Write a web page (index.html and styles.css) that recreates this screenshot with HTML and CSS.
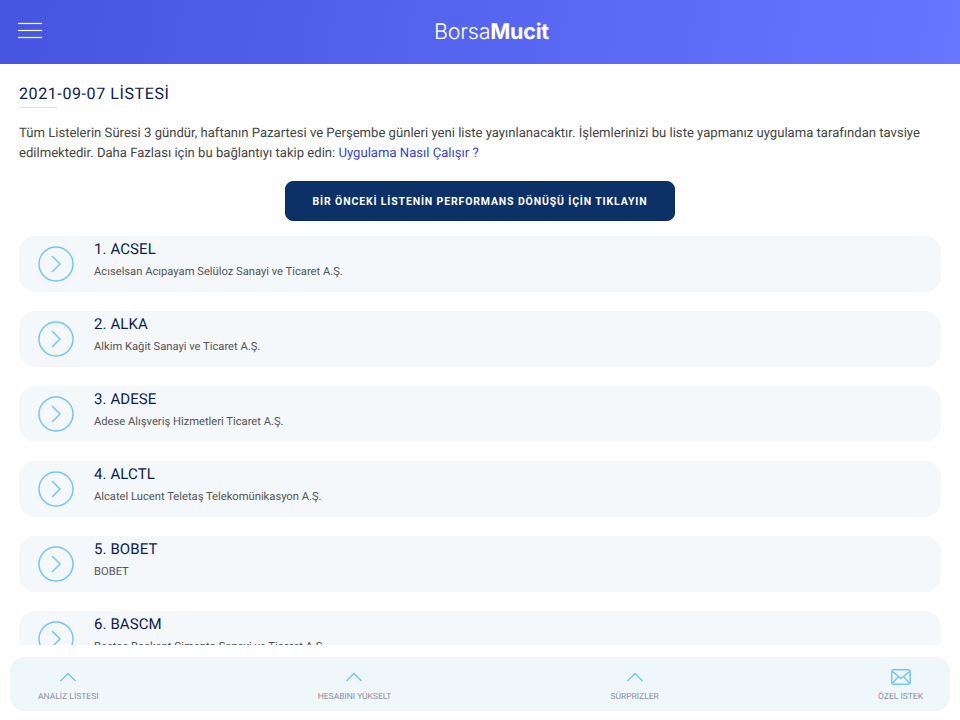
FILE: index.html
```html
<!DOCTYPE html>
<html lang="en">
<head>
    <meta charset="UTF-8">
    <meta name="viewport" content="width=device-width, initial-scale=1.0">
    <title>BorsaMucit</title>
    <link rel="stylesheet" href="styles.css">
</head>
<body>
    <header class="top-bar">
        <div class="menu-btn"><span></span><span></span><span></span></div>
        <div class="logo">Borsa<b>Mucit</b></div>
    </header>

    <main class="content">
        <h1 class="page-title">2021-09-07 LİSTESİ</h1>
        <p class="intro">Tüm Listelerin Süresi 3 gündür, haftanın Pazartesi ve Perşembe günleri yeni liste yayınlanacaktır. İşlemlerinizi bu liste yapmanız uygulama tarafından tavsiye edilmektedir. Daha Fazlası için bu bağlantıyı takip edin: <a href="#">Uygulama Nasıl Çalışır ?</a></p>
        <div class="perf-wrap">
            <button class="perf-btn">BİR ÖNCEKİ LİSTENİN PERFORMANS DÖNÜŞÜ İÇİN TIKLAYIN</button>
        </div>

        <div class="stock-list">
            <div class="stock">
                <svg class="stock-icon" viewBox="0 0 36 36"><circle cx="18" cy="18" r="17" /><path d="M14 10l8 8-8 8" /></svg>
                <div><div class="stock-name">1. ACSEL</div><div class="stock-desc">Acıselsan Acıpayam Selüloz Sanayi ve Ticaret A.Ş.</div></div>
            </div>
            <div class="stock">
                <svg class="stock-icon" viewBox="0 0 36 36"><circle cx="18" cy="18" r="17" /><path d="M14 10l8 8-8 8" /></svg>
                <div><div class="stock-name">2. ALKA</div><div class="stock-desc">Alkim Kağit Sanayi ve Ticaret A.Ş.</div></div>
            </div>
            <div class="stock">
                <svg class="stock-icon" viewBox="0 0 36 36"><circle cx="18" cy="18" r="17" /><path d="M14 10l8 8-8 8" /></svg>
                <div><div class="stock-name">3. ADESE</div><div class="stock-desc">Adese Alışveriş Hizmetleri Ticaret A.Ş.</div></div>
            </div>
            <div class="stock">
                <svg class="stock-icon" viewBox="0 0 36 36"><circle cx="18" cy="18" r="17" /><path d="M14 10l8 8-8 8" /></svg>
                <div><div class="stock-name">4. ALCTL</div><div class="stock-desc">Alcatel Lucent Teletaş Telekomünikasyon A.Ş.</div></div>
            </div>
            <div class="stock">
                <svg class="stock-icon" viewBox="0 0 36 36"><circle cx="18" cy="18" r="17" /><path d="M14 10l8 8-8 8" /></svg>
                <div><div class="stock-name">5. BOBET</div><div class="stock-desc">BOBET</div></div>
            </div>
            <div class="stock">
                <svg class="stock-icon" viewBox="0 0 36 36"><circle cx="18" cy="18" r="17" /><path d="M14 10l8 8-8 8" /></svg>
                <div><div class="stock-name">6. BASCM</div><div class="stock-desc">Bastaş Başkent Çimento Sanayi ve Ticaret A.Ş.</div></div>
            </div>
        </div>
    </main>

    <nav class="tab-bar">
        <div class="tab">
            <svg class="tab-icon" viewBox="0 0 20 20"><path d="M2.500 14L10 6.500l7.500 7.500" /></svg>
            <span>ANALİZ LİSTESİ</span>
        </div>
        <div class="tab">
            <svg class="tab-icon" viewBox="0 0 20 20"><path d="M2.500 14L10 6.500l7.500 7.500" /></svg>
            <span>HESABINI YÜKSELT</span>
        </div>
        <div class="tab">
            <svg class="tab-icon" viewBox="0 0 20 20"><path d="M2.500 14L10 6.500l7.500 7.500" /></svg>
            <span>SÜRPRİZLER</span>
        </div>
        <div class="tab">
            <svg class="tab-icon mail" viewBox="0 0 20 16"><rect x="0.800" y="0.800" width="18.400" height="14.400" rx="2" /><path d="M1.500 2.500L10 9.500l8.500-7M1.500 14l6-6.500M18.500 14l-6-6.500" /></svg>
            <span>ÖZEL İSTEK</span>
        </div>
    </nav>
</body>
</html>
```

FILE: styles.css
```css
body {
    font-family: Roboto, sans-serif;
    margin: 0;
    height: 720px;
    overflow: hidden;
    background-color: #fff;
    color: #333;
    display: flex;
    flex-direction: column;
    text-rendering: geometricPrecision;
}
.top-bar {
    flex: none;
    height: 64px;
    display: flex;
    align-items: center;
    justify-content: center;
    position: relative;
    background: linear-gradient(100deg, #4555e0 0%, #6676ff 100%);
}
.menu-btn {
    position: absolute;
    left: 18px;
    top: 23px;
    width: 24px;
    height: 15px;
    display: flex;
    flex-direction: column;
    justify-content: space-between;
}
.menu-btn span {
    display: block;
    height: 1px;
    background: #fff;
    box-shadow: 0 0 1px #fff;
}
.logo {
    font-family: Inter, sans-serif;
    font-size: 21.500px;
    font-weight: 300;
    color: #fff;
    letter-spacing: -0.2px;
    padding-left: 23px;
}
.logo b {
    font-weight: 700;
}
.content {
    flex: none;
    height: 581px;
    overflow: hidden;
    padding: 0 19px;
}
.page-title {
    margin: 20px 0 0;
    font-size: 16px;
    line-height: 19px;
    font-weight: 400;
    color: #0a1a55;
    letter-spacing: 0.6px;
    padding-bottom: 5px;
    position: relative;
}
.page-title::after {
    content: "";
    position: absolute;
    left: 0;
    bottom: 0;
    width: 38px;
    height: 1px;
    background: #d9e2ee;
}
.intro {
    margin: 16px 0 0;
    font-size: 13.100px;
    line-height: 20px;
    color: #444;
}
.intro a {
    color: #3344e0;
    text-decoration: none;
}
.perf-wrap {
    display: flex;
    justify-content: center;
    margin-top: 17px;
}
.perf-btn {
    width: 390px;
    height: 40px;
    border: 1px solid #0a2a5c;
    border-radius: 8px;
    background: #0c3166;
    color: #fff;
    font-family: Roboto, sans-serif;
    font-size: 10.500px;
    font-weight: 700;
    letter-spacing: 0.85px;
}
.stock-list {
    margin-top: 15px;
    display: flex;
    flex-direction: column;
    gap: 19px;
}
.stock {
    flex: none;
    height: 56px;
    display: flex;
    align-items: flex-start;
    gap: 20px;
    padding-left: 19px;
    background: #f4f8fa;
    border-radius: 16px;
}
.stock-icon {
    flex: none;
    width: 36px;
    height: 36px;
    margin-top: 10px;
    fill: none;
    stroke: #74c5fb;
    stroke-width: 1.500;
}
.stock-name {
    margin-top: 4px;
    font-size: 15px;
    line-height: 18px;
    color: #0a1a55;
    letter-spacing: 0.1px;
}
.stock-desc {
    margin-top: 6px;
    font-size: 11.200px;
    line-height: 16px;
    color: #555;
}
.tab-bar {
    flex: none;
    height: 54px;
    margin: 12px 10px 0;
    display: flex;
    justify-content: space-between;
    padding: 0 27px 0 28px;
    background: #f0f7fb;
    border-radius: 14px;
}
.tab {
    display: flex;
    flex-direction: column;
    align-items: center;
    padding-top: 10px;
    font-size: 8.500px;
    line-height: 10px;
    color: #8a90a0;
}
.tab-icon {
    width: 20px;
    height: 20px;
    fill: none;
    stroke: #74c5fb;
    stroke-width: 1.500;
    margin-bottom: 5px;
}
.tab-icon.mail {
    width: 20px;
    height: 16px;
    margin-top: 2px;
    margin-bottom: 7px;
}
```
